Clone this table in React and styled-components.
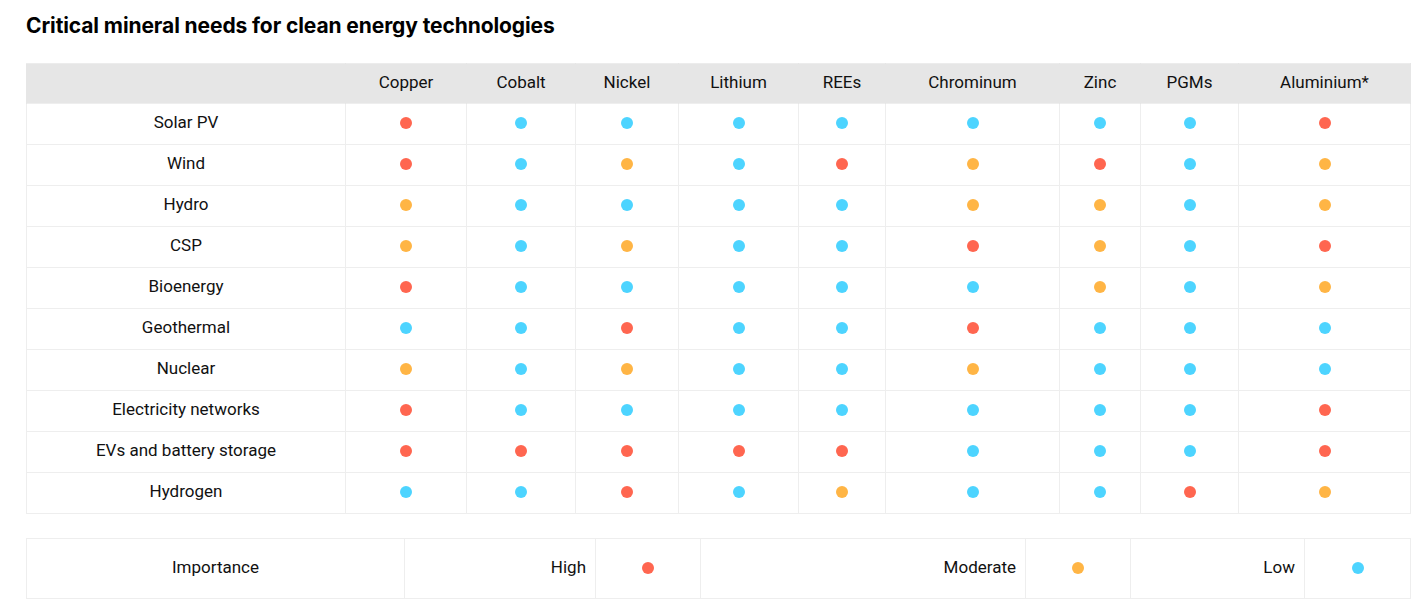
import React from "react"
import styled, { createGlobalStyle } from "styled-components"

const GlobalStyle = createGlobalStyle`
  body {
    margin: 0;
    background: #fff;
    font-family: Roboto, "Liberation Sans", sans-serif;
    color: #111;
  }
`

const Page = styled.div`
  padding: 12px 5px 0 26px;
`

const Title = styled.h2`
  margin: 0 0 23px;
  font-family: Inter, "Liberation Sans", sans-serif;
  font-weight: 700;
  font-size: 21px;
  line-height: 28px;
  letter-spacing: -0.1px;
  color: #000;
`

const Table = styled.table`
  width: 1384px;
  border-collapse: collapse;
  table-layout: fixed;
  font-size: 17px;
`

const HeadCell = styled.th`
  box-sizing: border-box;
  height: 40px;
  padding: 0 0 4px;
  background: #e6e6e6;
  font-weight: 400;
  text-align: center;
  border-left: 1px solid ${p => (p.$first ? "#e6e6e6" : "#f6f6f6")};
  border-right: 1px solid #e6e6e6;
  border-top: 1px solid #ececec;
`

const Cell = styled.td`
  box-sizing: border-box;
  height: 41px;
  padding: 0 ${p => (p.$align === "right" ? "9px" : "0")} 5px 0;
  text-align: ${p => p.$align || "center"};
  border: 1px solid #eeeeee;
`

const Dot = styled.span`
  display: inline-block;
  width: 12px;
  height: 12px;
  border-radius: 50%;
  vertical-align: -1px;
  background: ${p => p.$color};
`

const Legend = styled(Table)`
  margin-top: 24px;
`

const LegendCell = styled(Cell)`
  height: 60px;
  padding-bottom: 4px;
`

const colors = { H: "#ff6650", M: "#ffb545", L: "#4dd4ff" }

const minerals = ["Copper", "Cobalt", "Nickel", "Lithium", "REEs", "Chrominum", "Zinc", "PGMs", "Aluminium*"]
const widths = [319, 121, 109, 103, 120, 87, 174, 81, 98, 172]

const rows = [
  ["Solar PV", "HLLLLLLLH"],
  ["Wind", "HLMLHMHLM"],
  ["Hydro", "MLLLLMMLM"],
  ["CSP", "MLMLLHMLH"],
  ["Bioenergy", "HLLLLLMLM"],
  ["Geothermal", "LLHLLHLLL"],
  ["Nuclear", "MLMLLMLLL"],
  ["Electricity networks", "HLLLLLLLH"],
  ["EVs and battery storage", "HHHHHLLLH"],
  ["Hydrogen", "LLHLMLLHM"],
]

const legendWidths = [378, 191, 105, 325, 105, 174, 106]

export default function App() {
  return (
    <Page>
      <GlobalStyle />
      <Title>Critical mineral needs for clean energy technologies</Title>
      <Table>
        <colgroup>
          {widths.map((w, i) => <col key={i} style={{ width: w }} />)}
        </colgroup>
        <thead>
          <tr>
            <HeadCell $first />
            {minerals.map(m => <HeadCell key={m}>{m}</HeadCell>)}
          </tr>
        </thead>
        <tbody>
          {rows.map(([name, levels]) => (
            <tr key={name}>
              <Cell>{name}</Cell>
              {levels.split("").map((l, i) => (
                <Cell key={i}><Dot $color={colors[l]} /></Cell>
              ))}
            </tr>
          ))}
        </tbody>
      </Table>
      <Legend>
        <colgroup>
          {legendWidths.map((w, i) => <col key={i} style={{ width: w }} />)}
        </colgroup>
        <tbody>
          <tr>
            <LegendCell>Importance</LegendCell>
            <LegendCell $align="right">High</LegendCell>
            <LegendCell><Dot $color={colors.H} /></LegendCell>
            <LegendCell $align="right">Moderate</LegendCell>
            <LegendCell><Dot $color={colors.M} /></LegendCell>
            <LegendCell $align="right">Low</LegendCell>
            <LegendCell><Dot $color={colors.L} /></LegendCell>
          </tr>
        </tbody>
      </Legend>
    </Page>
  )
}
